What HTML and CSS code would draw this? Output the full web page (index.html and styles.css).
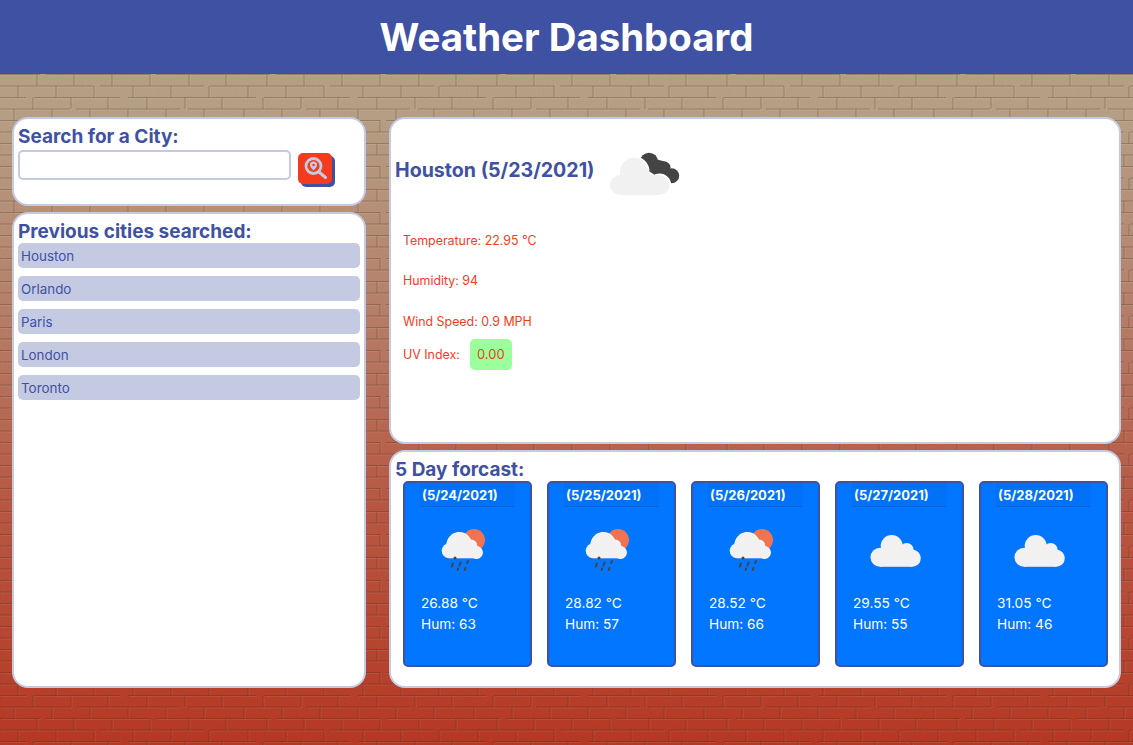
FILE: index.html
```html
<!DOCTYPE html>
<html lang="en">
<head>
    <meta charset="UTF-8">
    <title>Weather Dashboard</title>
    <link rel="stylesheet" href="styles.css">
</head>
<body>
<header class="top-bar">
    <h1>Weather Dashboard</h1>
</header>
<main class="layout">
    <div class="side">
        <section class="panel search-panel">
            <h2>Search for a City:</h2>
            <div class="search-row">
                <input class="search-input" type="text">
                <button class="search-btn" type="button">
                    <svg viewBox="0 0 34 31" width="34" height="31">
                        <circle cx="15.500" cy="13" r="7.500" fill="none" stroke="#c5cae3" stroke-width="2.800"/>
                        <path d="M21 19l6.500 5.500" stroke="#c5cae3" stroke-width="3" stroke-linecap="round"/>
                        <path d="M15.500 8.500a3.600 3.600 0 0 1 3.600 3.600c0 2.200-3.600 5.400-3.600 5.400s-3.600-3.200-3.600-5.400a3.600 3.600 0 0 1 3.600-3.600z" fill="#c5cae3"/>
                        <circle cx="15.500" cy="12" r="1.200" fill="#f53b1e"/>
                    </svg>
                </button>
            </div>
        </section>
        <section class="panel history-panel">
            <h2>Previous cities searched:</h2>
            <ul class="history">
                <li>Houston</li>
                <li>Orlando</li>
                <li>Paris</li>
                <li>London</li>
                <li>Toronto</li>
            </ul>
        </section>
    </div>
    <div class="content">
        <section class="panel current">
            <div class="current-head">
                <h2>Houston (5/23/2021)</h2>
                <svg class="current-icon" viewBox="0 0 72 46" width="72" height="46">
                    <g fill="#444">
                        <circle cx="40" cy="11.700" r="9"/>
                        <circle cx="56" cy="17.300" r="5.500"/>
                        <circle cx="62.700" cy="25.700" r="7.500"/>
                        <path d="M34 6L58 12L63 33L45 34z"/>
                    </g>
                    <g fill="#fff" stroke="#fff" stroke-width="3">
                        <circle cx="25" cy="21.700" r="14"/>
                        <circle cx="38" cy="31" r="8"/>
                        <circle cx="50.600" cy="35" r="10"/>
                    </g>
                    <g fill="#f1f1f1">
                        <circle cx="25" cy="21.700" r="14"/>
                        <circle cx="11" cy="35" r="10"/>
                        <circle cx="38" cy="31" r="8"/>
                        <circle cx="50.600" cy="35" r="10"/>
                        <rect x="11" y="25" width="39.600" height="20"/>
                    </g>
                </svg>
            </div>
            <p class="stat stat-temp">Temperature: 22.95 ℃</p>
            <p class="stat stat-hum">Humidity: 94</p>
            <p class="stat stat-wind">Wind Speed: 0.9 MPH</p>
            <p class="stat stat-uv">UV Index: <span class="uv">0.00</span></p>
        </section>
        <section class="panel forecast">
            <h2>5 Day forcast:</h2>
            <div class="cards">
                <div class="card">
                    <div class="card-date">(5/24/2021)</div>
                    <svg class="card-icon" viewBox="0 0 52 46" width="52" height="46"><use href="#rain"/></svg>
                    <p class="card-temp">26.88 ℃</p>
                    <p>Hum: 63</p>
                </div>
                <div class="card">
                    <div class="card-date">(5/25/2021)</div>
                    <svg class="card-icon" viewBox="0 0 52 46" width="52" height="46"><use href="#rain"/></svg>
                    <p class="card-temp">28.82 ℃</p>
                    <p>Hum: 57</p>
                </div>
                <div class="card">
                    <div class="card-date">(5/26/2021)</div>
                    <svg class="card-icon" viewBox="0 0 52 46" width="52" height="46"><use href="#rain"/></svg>
                    <p class="card-temp">28.52 ℃</p>
                    <p>Hum: 66</p>
                </div>
                <div class="card">
                    <div class="card-date">(5/27/2021)</div>
                    <svg class="card-icon" viewBox="0 0 52 46" width="52" height="46"><use href="#cloud"/></svg>
                    <p class="card-temp">29.55 ℃</p>
                    <p>Hum: 55</p>
                </div>
                <div class="card">
                    <div class="card-date">(5/28/2021)</div>
                    <svg class="card-icon" viewBox="0 0 52 46" width="52" height="46"><use href="#cloud"/></svg>
                    <p class="card-temp">31.05 ℃</p>
                    <p>Hum: 46</p>
                </div>
            </div>
        </section>
    </div>
</main>
<svg class="defs" width="0" height="0">
    <symbol id="rain" viewBox="0 0 52 46">
        <circle cx="36" cy="15" r="11" fill="#ee7550"/>
        <g fill="#fff" stroke="#fff" stroke-width="1.200">
            <circle cx="21.300" cy="20" r="12.300"/>
            <circle cx="32.700" cy="21" r="6"/>
            <circle cx="38.500" cy="27.500" r="5.800"/>
        </g>
        <g fill="#f1f1f1">
            <circle cx="21.300" cy="20" r="12.300"/>
            <circle cx="11.200" cy="25.800" r="7.500"/>
            <circle cx="32.700" cy="21" r="6"/>
            <circle cx="38.500" cy="27.500" r="5.800"/>
            <rect x="11.200" y="22" width="27.300" height="11.300"/>
        </g>
        <circle cx="17" cy="33" r="1.500" fill="#444"/>
        <path d="M14.800 38.500l-1 3M22.500 37.500l-1 3M30 36l-.6 2M20 43.500l-.5 1.500M27.500 43l-.6 2" stroke="#444" stroke-width="2" stroke-linecap="round" fill="none"/>
    </symbol>
    <symbol id="cloud" viewBox="0 0 52 46">
        <g fill="#f1f1f1">
            <circle cx="21.700" cy="21" r="11"/>
            <circle cx="36.700" cy="25" r="7"/>
            <circle cx="10" cy="32.300" r="9.500"/>
            <circle cx="42.300" cy="33.300" r="8.500"/>
            <rect x="10" y="24" width="32.300" height="17.800"/>
        </g>
    </symbol>
</svg>
</body>
</html>
```
FILE: styles.css
```css
*{
    margin: 0;
    padding: 0;
    box-sizing: border-box;
}
ul{
    list-style: none;
}
html,body{
    height: 100%;
}
body{
    font-family: "Inter", "Noto Sans", "Liberation Sans", sans-serif;
    background-color: #b0392a;
    background-image:
        url("data:image/svg+xml,%3Csvg xmlns='http://www.w3.org/2000/svg' width='230' height='46'%3E%3Cfilter id='n'%3E%3CfeTurbulence type='fractalNoise' baseFrequency='.9' numOctaves='2' stitchTiles='stitch'/%3E%3CfeColorMatrix values='0 0 0 0 0 0 0 0 0 0 0 0 0 0 0 0 0 0 .5 0'/%3E%3C/filter%3E%3Crect width='230' height='46' filter='url(%23n)' opacity='.12'/%3E%3Cpath id='b' fill='none' stroke='%23fff' stroke-opacity='.08' transform='translate(1 1)' d='M0 5.500H26M34 5.500H120M128 5.500H230M0 17H70M76 17H180M188 17H230M0 28.500H40M46 28.500H150M156 28.500H230M0 40H94M100 40H204M210 40H230M33 5.500V17M71 5.500V17M108 5.500V17M147 5.500V17M185 5.500V17M222 5.500V17M14 17V28.500M52 17V28.500M90 17V28.500M128 17V28.500M166 17V28.500M204 17V28.500M37 28.500V40M74 28.500V40M112 28.500V40M150 28.500V40M189 28.500V40M226 28.500V40M18 40V46M18 0V5.500M56 40V46M56 0V5.500M94 40V46M94 0V5.500M133 40V46M133 0V5.500M171 40V46M171 0V5.500M209 40V46M209 0V5.500'/%3E%3Cpath fill='none' stroke='%233a2a18' stroke-opacity='.28' d='M0 5.500H26M34 5.500H120M128 5.500H230M0 17H70M76 17H180M188 17H230M0 28.500H40M46 28.500H150M156 28.500H230M0 40H94M100 40H204M210 40H230M33 5.500V17M71 5.500V17M108 5.500V17M147 5.500V17M185 5.500V17M222 5.500V17M14 17V28.500M52 17V28.500M90 17V28.500M128 17V28.500M166 17V28.500M204 17V28.500M37 28.500V40M74 28.500V40M112 28.500V40M150 28.500V40M189 28.500V40M226 28.500V40M18 40V46M18 0V5.500M56 40V46M56 0V5.500M94 40V46M94 0V5.500M133 40V46M133 0V5.500M171 40V46M171 0V5.500M209 40V46M209 0V5.500'/%3E%3C/svg%3E"),
        linear-gradient(180deg, #bba488 0, #bba488 15%, #bb8870 38%, #bd5a44 68%, #bb3a24 100%);
    background-size: 230px 46px, auto;
    overflow: hidden;
}
.defs{
    display: block;
    height: 0;
}
.top-bar{
    height: 74px;
    background: #3f51a3;
    display: flex;
    align-items: center;
    justify-content: center;
}
.top-bar h1{
    color: #fff;
    font-size: 38.400px;
    font-weight: 700;
}
.layout{
    display: flex;
    gap: 23px;
    padding: 43px 12px 0;
}
.side{
    width: 354px;
    display: flex;
    flex-direction: column;
    gap: 6px;
}
.content{
    width: 732px;
    display: flex;
    flex-direction: column;
    gap: 6px;
}
.panel{
    background: #fff;
    border: 2px solid #c5cae3;
    border-radius: 16px;
}
.panel h2{
    color: #3f51a3;
    font-size: 19px;
    font-weight: 700;
    line-height: 24px;
}
.search-panel{
    height: 89px;
    padding: 6px 4px 4px;
}
.search-row{
    display: flex;
    align-items: flex-start;
    gap: 7px;
    margin-top: 1px;
}
.search-input{
    width: 273px;
    height: 30px;
    border: 2px solid #c5cae3;
    border-radius: 5px;
    background: #fff;
}
.search-btn{
    width: 34px;
    height: 31px;
    margin-top: 3px;
    background: #f53b1e;
    border: 0;
    border-radius: 5px;
    box-shadow: 3px 3px 0 #3f51a3;
    display: flex;
}
.history-panel{
    height: 476px;
    padding: 6px 4px;
}
.history-panel h2{
    line-height: 23px;
}
.history{
    display: flex;
    flex-direction: column;
    gap: 8px;
}
.history li{
    height: 25px;
    line-height: 26px;
    padding-left: 3px;
    background: #c5cae3;
    border-radius: 5px;
    color: #3f51a3;
    font-size: 13.400px;
}
.current{
    height: 327px;
    padding: 0 5px;
    color: #f53b1e;
    font-size: 12.400px;
}
.current-head{
    display: flex;
    align-items: center;
    gap: 14px;
    height: 102px;
}
.current-head h2{
    font-size: 19.600px;
    margin-left: -1px;
}
.current-icon{
    margin-top: 6px;
}
.stat{
    padding-left: 7px;
    line-height: 18px;
}
.stat-temp{
    margin-top: 11px;
}
.stat-hum{
    margin-top: 22px;
}
.stat-wind{
    margin-top: 23px;
}
.stat-uv{
    margin-top: 8px;
    display: flex;
    align-items: center;
    gap: 10px;
}
.uv{
    width: 42px;
    height: 31px;
    line-height: 31px;
    text-align: center;
    background: #9bff9b;
    border-radius: 5px;
    font-size: 13px;
}
.forecast{
    height: 238px;
    padding: 6px 5px 5px;
}
.forecast h2{
    line-height: 23px;
    margin-left: -1px;
}
.cards{
    display: flex;
    gap: 15px;
    padding-left: 7px;
}
.card{
    width: 129px;
    height: 186px;
    background: #0276ff;
    border: 2px solid #3f51a3;
    border-radius: 5px;
    color: #fff;
    font-size: 13.700px;
    padding-left: 15px;
}
.card-date{
    width: 95px;
    height: 24px;
    padding-left: 2px;
    font-size: 13px;
    font-weight: 700;
    line-height: 24px;
    background: rgba(0,0,0,.03);
    border-bottom: 1px solid rgba(0,0,0,.1);
}
.card-icon{
    display: block;
    margin: 18px 0 0 18px;
}
.card p{
    line-height: 21px;
    padding-left: 1px;
}
.card-temp{
    margin-top: 22px;
}
```
